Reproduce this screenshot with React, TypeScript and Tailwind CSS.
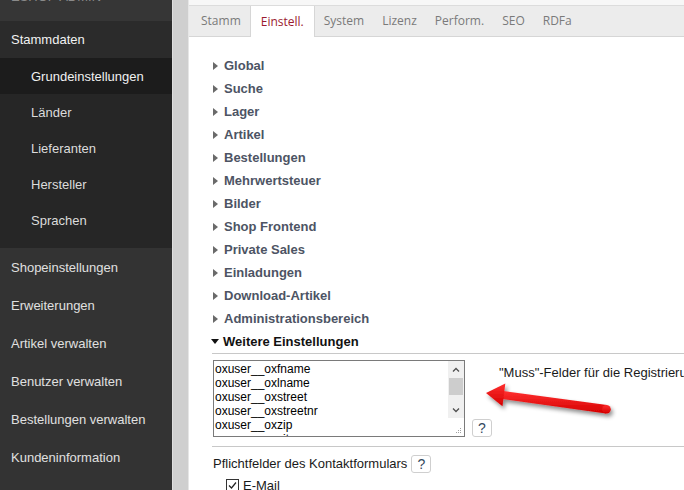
import React from 'react';

const sans = { fontFamily: '"Liberation Sans", Arial, sans-serif' };

const subItems = ['Länder', 'Lieferanten', 'Hersteller', 'Sprachen'];
const mainItems = [
  'Shopeinstellungen',
  'Erweiterungen',
  'Artikel verwalten',
  'Benutzer verwalten',
  'Bestellungen verwalten',
  'Kundeninformation',
];
const tabs = ['Stamm', 'Einstell.', 'System', 'Lizenz', 'Perform.', 'SEO', 'RDFa'];
const groups = [
  'Global',
  'Suche',
  'Lager',
  'Artikel',
  'Bestellungen',
  'Mehrwertsteuer',
  'Bilder',
  'Shop Frontend',
  'Private Sales',
  'Einladungen',
  'Download-Artikel',
  'Administrationsbereich',
];
const fields = [
  'oxuser__oxfname',
  'oxuser__oxlname',
  'oxuser__oxstreet',
  'oxuser__oxstreetnr',
  'oxuser__oxzip',
  'oxuser__oxcity',
];

const HelpButton: React.FC = () => (
  <div className="flex h-[18px] w-[20px] items-center justify-center rounded-[3px] border border-[#cfcfcf] bg-white text-[14px] leading-none text-[#34495e]">
    ?
  </div>
);

const Sidebar: React.FC = () => (
  <aside className="flex w-[172px] shrink-0 flex-col bg-[#333333] text-[13px]" style={sans}>
    <div className="h-[21px] overflow-hidden bg-[#363636] pl-[11px]">
      <div className="-mt-[10px] leading-[13px] text-[#8a8a8a]">ESHOP ADMIN</div>
    </div>
    <div className="flex h-[37px] items-center bg-[#2b2b2b] pl-[11px] pt-px text-[#f2f2f2]">Stammdaten</div>
    <div className="flex flex-col bg-[#262626] pb-[10px]">
      <div className="flex h-[36px] items-center bg-[#1c1c1c] pl-[31px] pt-px text-[#f0f0f0]">Grundeinstellungen</div>
      {subItems.map((s) => (
        <div key={s} className="flex h-[36px] items-center pl-[31px] pt-px text-[#dcdcdc]">
          {s}
        </div>
      ))}
    </div>
    {mainItems.map((s) => (
      <div key={s} className="flex h-[38px] items-center pl-[11px] pt-px text-[#e0e0e0]">
        {s}
      </div>
    ))}
  </aside>
);

const Tabs: React.FC = () => (
  <nav
    className="flex h-[31px] border-b border-[#d6d6d6] bg-[#ececec] pl-[3px] text-[12px]"
    style={{ fontFamily: '"Open Sans", sans-serif' }}
  >
    {tabs.map((t) =>
      t === 'Einstell.' ? (
        <div
          key={t}
          className="relative z-10 flex h-[31px] items-center border-x border-[#d6d6d6] bg-white px-[10px] text-[#9b1b30]"
        >
          {t}
        </div>
      ) : (
        <div key={t} className="flex items-center px-[9px] text-[#7a7a7a]">
          {t}
        </div>
      )
    )}
  </nav>
);

const FieldBox: React.FC = () => (
  <div className="flex h-[77px] w-[252px] shrink-0 border border-[#7a7a7a] bg-white" style={sans}>
    <div className="flex-1 overflow-hidden pl-[1px] pt-[1px] text-[12px] leading-[14px] text-black">
      {fields.map((f) => (
        <div key={f}>{f}</div>
      ))}
    </div>
    <div className="flex w-[16px] flex-col">
      <div className="flex flex-col bg-[#f0f0f0]">
        <div className="flex h-[17px] items-center justify-center">
          <svg width="8" height="5" viewBox="0 0 8 5">
            <path d="M1 4.5 L4 1.5 L7 4.5" fill="none" stroke="#505050" strokeWidth="1.3" />
          </svg>
        </div>
        <div className="mx-px h-[17px] bg-[#cdcdcd]" />
        <div className="h-[7px]" />
        <div className="flex h-[16px] items-center justify-center">
          <svg width="8" height="5" viewBox="0 0 8 5">
            <path d="M1 0.5 L4 3.5 L7 0.5" fill="none" stroke="#505050" strokeWidth="1.3" />
          </svg>
        </div>
      </div>
      <div className="flex flex-1 items-end justify-end pb-[2px] pr-[2px]">
        <svg width="7" height="7" viewBox="0 0 7 7">
          <rect x="5" y="1" width="1" height="1" fill="#a0a0a0" />
          <rect x="3" y="3" width="1" height="1" fill="#a0a0a0" />
          <rect x="5" y="3" width="1" height="1" fill="#a0a0a0" />
          <rect x="1" y="5" width="1" height="1" fill="#a0a0a0" />
          <rect x="3" y="5" width="1" height="1" fill="#a0a0a0" />
          <rect x="5" y="5" width="1" height="1" fill="#a0a0a0" />
        </svg>
      </div>
    </div>
  </div>
);

const RedArrow: React.FC = () => (
  <svg className="absolute left-[281px] top-[370px]" width="150" height="55" viewBox="0 0 150 55">
    <defs>
      <filter id="sh" x="-20%" y="-40%" width="140%" height="180%">
        <feDropShadow dx="2" dy="3" stdDeviation="2" floodColor="#000" floodOpacity="0.45" />
      </filter>
      <linearGradient id="rg" x1="0" y1="0" x2="0" y2="1">
        <stop offset="0" stopColor="#ff3030" />
        <stop offset="1" stopColor="#d40000" />
      </linearGradient>
    </defs>
    <g filter="url(#sh)" fill="url(#rg)">
      <path d="M33 21 L137 35 L136 43.5 L32.5 29 Z" />
      <circle cx="136.5" cy="39.2" r="4.3" />
      <path d="M16 23 L35.3 13.4 L32.5 36.2 Z" />
    </g>
  </svg>
);

const App: React.FC = () => {
  return (
    <div className="flex h-[490px] w-[684px] overflow-hidden bg-white">
      <Sidebar />
      <div className="w-px shrink-0 bg-[#dedede]" />
      <div className="w-[15px] shrink-0 bg-[#cfcfcf]" />
      <div className="w-px shrink-0 bg-[#e6e6e6]" />
      <main className="relative min-w-0 flex-1 overflow-hidden bg-white">
        <div className="h-[6px] border-b border-[#dcdcdc] bg-[#f7f7f7]" />
        <Tabs />
        <div className="flex flex-col pl-[24px] pt-[17px]" style={sans}>
          {groups.map((g) => (
            <div key={g} className="flex h-[23px] items-center text-[13px] font-bold text-[#4d5464]">
              <span className="flex w-[11px] shrink-0 justify-start">
                <svg width="5" height="8" viewBox="0 0 5 8">
                  <path d="M0 0 L5 4 L0 8 Z" fill="#6a6a6a" />
                </svg>
              </span>
              {g}
            </div>
          ))}
          <div className="flex h-[23px] items-center text-[13px] font-bold text-[#111]">
            <span className="flex w-[12px] shrink-0 -ml-[2px]">
              <svg width="8" height="5" viewBox="0 0 8 5">
                <path d="M0 0 L8 0 L4 5 Z" fill="#111" />
              </svg>
            </span>
            Weitere Einstellungen
          </div>
          <div className="-ml-px border-t border-[#c8c8c8]" />
          <div className="mt-[6px] flex">
            <FieldBox />
            <div className="ml-[7px] flex flex-col justify-end">
              <HelpButton />
            </div>
            <div className="ml-[7px] whitespace-nowrap pt-[3px] text-[13px] text-[#1a1a1a]">
              "Muss"-Felder für die Registrierung
            </div>
          </div>
          <div className="-ml-px mt-[9px] border-t border-[#c8c8c8]" />
          <div className="mt-[8px] flex h-[18px] items-center text-[13px] text-[#1a1a1a]">
            <span>Pflichtfelder des Kontaktformulars</span>
            <span className="ml-[4px]">
              <HelpButton />
            </span>
          </div>
          <div className="mt-[3px] flex items-center pl-[13px] text-[13px] text-[#1a1a1a]">
            <svg width="13" height="13" viewBox="0 0 13 13">
              <rect x="0.5" y="0.5" width="12" height="12" fill="#fff" stroke="#333" />
              <path d="M3 6.5 L5.5 9 L10 3.5" fill="none" stroke="#222" strokeWidth="1.2" />
            </svg>
            <span className="ml-[4px]">E-Mail</span>
          </div>
        </div>
        <RedArrow />
      </main>
    </div>
  );
};

export default App;
